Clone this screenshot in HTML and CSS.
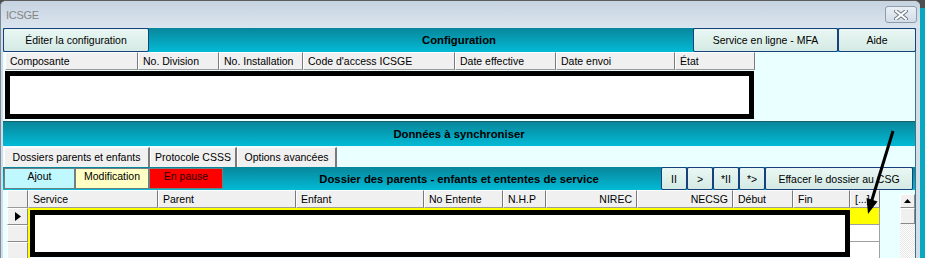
FILE: index.html
```html
<!DOCTYPE html>
<html lang="fr">
<head>
  <meta charset="UTF-8">
  <meta name="viewport" content="width=device-width, initial-scale=1.0">
  <title>ICSGE</title>
  <link rel="stylesheet" href="styles.css">
</head>
<body>
  <div class="window">
    <div class="titlebar">
      <span class="title">ICSGE</span>
      <span class="close-btn">
        <svg width="14" height="10" viewBox="0 0 14 10">
          <path d="M2 1 L12 9 M12 1 L2 9" stroke="#6f7a86" stroke-width="4" stroke-linecap="square"/>
          <path d="M2 1 L12 9 M12 1 L2 9" stroke="#fff" stroke-width="2" stroke-linecap="square"/>
        </svg>
      </span>
    </div>

    <div class="client">
      <!-- Configuration -->
      <div class="bar bar-config">
        <div class="bar-left">
          <button class="btn btn-edit">Éditer la configuration</button>
        </div>
        <div class="bar-title">Configuration</div>
        <div class="bar-right">
          <button class="btn btn-mfa">Service en ligne - MFA</button>
          <button class="btn btn-help">Aide</button>
        </div>
      </div>

      <div class="config-grid">
        <div class="grid-head config-head">
          <div class="hcell">Composante</div>
          <div class="hcell">No. Division</div>
          <div class="hcell">No. Installation</div>
          <div class="hcell">Code d'access ICSGE</div>
          <div class="hcell">Date effective</div>
          <div class="hcell">Date envoi</div>
          <div class="hcell">État</div>
        </div>
        <div class="redacted redacted-config"></div>
      </div>

      <!-- Données à synchroniser -->
      <div class="bar bar-sync">
        <div></div>
        <div class="bar-title">Données à synchroniser</div>
        <div></div>
      </div>

      <div class="tabs">
        <div class="tab tab-dossiers">Dossiers parents et enfants</div>
        <div class="tab tab-protocole">Protocole CSSS</div>
        <div class="tab tab-options">Options avancées</div>
      </div>

      <div class="bar bar-dossier">
        <div class="bar-left legend">
          <div class="legend-cell legend-add">Ajout</div>
          <div class="legend-cell legend-edit">Modification</div>
          <div class="legend-cell legend-pause">En pause</div>
        </div>
        <div class="bar-title">Dossier des parents - enfants et ententes de service</div>
        <div class="bar-right">
          <button class="btn btn-small">II</button>
          <button class="btn btn-small">&gt;</button>
          <button class="btn btn-small">*II</button>
          <button class="btn btn-small">*&gt;</button>
          <button class="btn btn-clear">Effacer le dossier au CSG</button>
        </div>
      </div>

      <div class="dossier-area">
        <div class="dossier-grid">
          <div class="grid-head dossier-head">
            <div class="hcell"></div>
            <div class="hcell">Service</div>
            <div class="hcell">Parent</div>
            <div class="hcell">Enfant</div>
            <div class="hcell">No Entente</div>
            <div class="hcell">N.H.P</div>
            <div class="hcell right">NIREC</div>
            <div class="hcell right">NECSG</div>
            <div class="hcell">Début</div>
            <div class="hcell">Fin</div>
            <div class="hcell">[...]</div>
          </div>
          <div class="grid-body">
            <div class="row-heads">
              <div class="rh current">
                <svg width="6" height="9" viewBox="0 0 6 9"><path d="M0 0 L6 4.5 L0 9 Z" fill="#000"/></svg>
              </div>
              <div class="rh"></div>
              <div class="rh"></div>
            </div>
            <div class="rows-main">
              <div class="redacted redacted-dossier"></div>
            </div>
            <div class="extra-col">
              <div class="xc selected"></div>
              <div class="xc"></div>
              <div class="xc"></div>
            </div>
          </div>
        </div>

        <div class="scrollbar">
          <div class="sb-up">
            <svg width="7" height="4" viewBox="0 0 7 4"><path d="M0 4 L3.5 0 L7 4 Z" fill="#000"/></svg>
          </div>
          <div class="sb-thumb"></div>
          <div class="sb-track"></div>
        </div>
      </div>
    </div>
  </div>

  <svg class="pointer-arrow" width="925" height="258" viewBox="0 0 925 258">
    <line x1="893" y1="131" x2="871" y2="203" stroke="#000" stroke-width="3"/>
    <polygon points="868,214 866.5,198 877.5,201.5" fill="#000"/>
  </svg>
</body>
</html>
```

FILE: styles.css
```css
* {
  box-sizing: border-box;
}

body {
  position: relative;
  margin: 0;
  height: 258px;
  overflow: hidden;
  background: linear-gradient(#4e4e4e 0, #4e4e4e 8px, #0aa8c0 8px);
  font-family: "Liberation Sans", Arial, sans-serif;
  font-size: 10.5px;
  color: #000;
}

.window {
  width: 920px;
  height: 258px;
  background-color: #d4dee8;
  border-top: 1px solid #5c5c5c;
  border-left: 1px solid #7d8a97;
  border-radius: 6px 6px 0 0;
  overflow: hidden;
}

.titlebar {
  height: 27px;
  display: flex;
  align-items: center;
  justify-content: space-between;
  padding: 0 3px 0 5px;
  background: linear-gradient(#c6d3e0, #dbe5ef);
}

.title {
  color: #858585;
  font-size: 11px;
  letter-spacing: -0.3px;
}

.close-btn {
  width: 32px;
  height: 17px;
  display: flex;
  align-items: center;
  justify-content: center;
  border: 1px solid #8e9cab;
  border-radius: 3px;
  background: linear-gradient(#e9eff5, #d2dce7);
}

.client {
  height: 230px;
  margin: 0 4px 0 2px;
  background-color: #eaffff;
  border-right: 1px solid #3c7480;
}

/* teal title bars */
.bar {
  display: grid;
  grid-template-columns: 1fr auto 1fr;
  background: linear-gradient(#07869b, #03bad5);
}

.bar-title {
  align-self: center;
  font-weight: bold;
  font-size: 11.3px;
  white-space: nowrap;
}

.bar-left {
  display: flex;
  justify-self: start;
}

.bar-right {
  display: flex;
  justify-self: end;
}

.btn {
  font: inherit;
  color: #000;
  padding: 0;
  background: linear-gradient(#e9f7f3, #d5eae4);
  border: 1px solid #17407c;
  border-radius: 2px;
  white-space: nowrap;
}

.bar-config {
  height: 24px;
}

.btn-edit {
  width: 146px;
}

.btn-mfa {
  width: 145px;
}

.btn-help {
  width: 78px;
  margin-right: -1px;
}

/* header cells */
.grid-head {
  display: grid;
  height: 18px;
}

.hcell {
  background-color: #f0f0f0;
  border-top: 1px solid #fff;
  border-left: 1px solid #fff;
  border-right: 1px solid #7a7a7a;
  border-bottom: 1px solid #9a9a9a;
  padding: 0 4px;
  line-height: 16px;
  white-space: nowrap;
  overflow: hidden;
}

.hcell.right {
  text-align: right;
}

.config-grid {
  width: 750px;
  margin-left: 2px;
}

.config-head {
  grid-template-columns: 133px 81px 84px 152px 101px 119px 80px;
}

.redacted {
  background-color: #fff;
  border: 5px solid #000;
}

.redacted-config {
  width: 749px;
  height: 48px;
  margin-top: 1px;
}

.bar-sync {
  height: 25px;
  margin-top: 2px;
  border-top: 1px solid #1b5f6c;
}

/* tabs */
.tabs {
  display: flex;
  height: 20px;
  margin-top: 1px;
  padding-left: 1px;
}

.tab {
  background-color: #f0f0f0;
  border-top: 1px solid #fff;
  border-left: 1px solid #fff;
  border-right: 2px solid #7a7a7a;
  text-align: center;
  line-height: 19px;
  white-space: nowrap;
}

.tab-dossiers {
  width: 146px;
}

.tab-protocole {
  width: 87px;
}

.tab-options {
  width: 100px;
}

.bar-dossier {
  height: 23px;
}

.legend {
  padding: 1px 0 1px 1px;
}

.legend-cell {
  border: 1px solid #6f7f82;
  text-align: center;
  line-height: 15px;
}

.legend-add {
  width: 71px;
  background-color: #c0f8ff;
}

.legend-edit {
  width: 74px;
  background-color: #ffffc4;
}

.legend-pause {
  width: 74px;
  background-color: #ff0000;
  color: #2a0000;
}

.bar-dossier .bar-right {
  margin-right: 2px;
}

.btn-small {
  width: 26px;
}

.btn-clear {
  width: 148px;
}

/* dossier grid */
.dossier-area {
  display: flex;
}

.dossier-grid {
  width: 873px;
  margin-left: 4px;
}

.dossier-head {
  grid-template-columns: 21px 130px 138px 128px 79px 43px 91px 96px 60px 57px 30px;
}

.grid-body {
  display: flex;
  height: 50px;
}

.row-heads {
  width: 21px;
}

.rh {
  height: 17px;
  display: flex;
  align-items: center;
  justify-content: center;
  background-color: #f0f0f0;
  border-top: 1px solid #fff;
  border-left: 1px solid #fff;
  border-right: 1px solid #8a8a8a;
  border-bottom: 1px solid #8a8a8a;
}

.rows-main {
  width: 822px;
  border-top: 2px solid #ffff00;
  border-left: 2px solid #ffff00;
}

.redacted-dossier {
  height: 47px;
}

.extra-col {
  width: 30px;
}

.xc {
  height: 17px;
  background-color: #fff;
  border-right: 1px solid #a0a0a0;
  border-bottom: 1px solid #a0a0a0;
}

.xc.selected {
  background-color: #ffff00;
}

/* scrollbar */
.scrollbar {
  width: 15px;
  margin-left: 20px;
  margin-top: 4px;
}

.sb-up,
.sb-thumb {
  display: flex;
  align-items: center;
  justify-content: center;
  background-color: #f0f0f0;
  border-top: 1px solid #fff;
  border-left: 1px solid #fff;
  border-right: 1px solid #8a8a8a;
  border-bottom: 1px solid #8a8a8a;
}

.sb-up {
  height: 14px;
}

.sb-thumb {
  height: 16px;
}

.sb-track {
  height: 40px;
  background: repeating-conic-gradient(#ffffff 0 25%, #e6e6e6 0 50%) 0 0 / 2px 2px;
}

.pointer-arrow {
  position: absolute;
  left: 0;
  top: 0;
  pointer-events: none;
}
```
